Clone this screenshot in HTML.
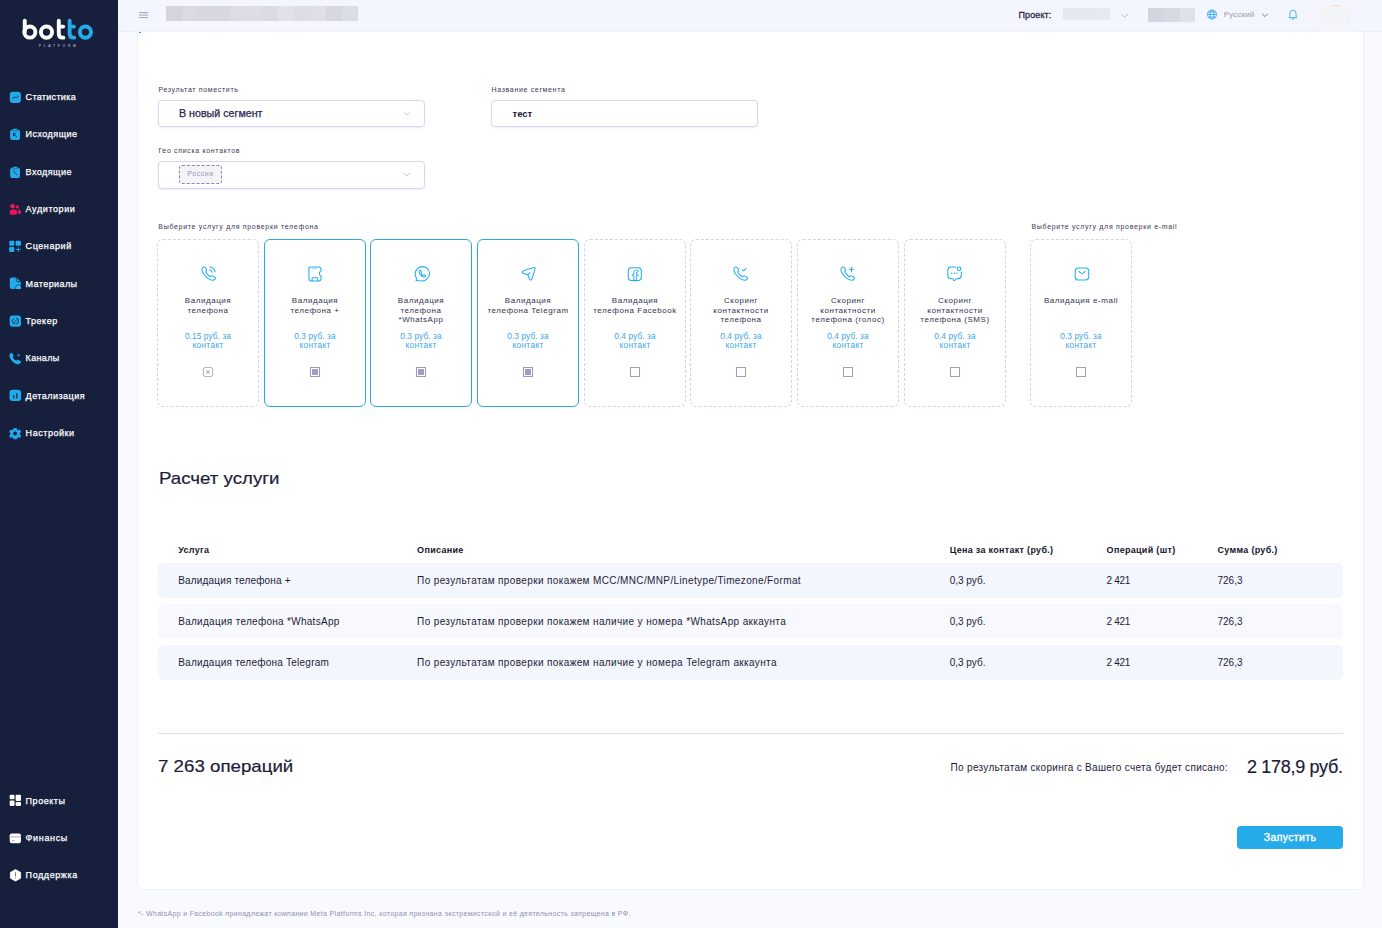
<!DOCTYPE html>
<html lang="ru"><head><meta charset="utf-8"><title>botto</title>
<style>
html,body{margin:0;padding:0;width:1382px;height:928px;overflow:hidden;background:#f9fafd;}
body{position:relative;font-family:"Liberation Sans",sans-serif;}
.a{position:absolute;display:block;}
.t{position:absolute;white-space:nowrap;}
</style></head><body>
<div class="a" style="left:0px;top:0px;width:118px;height:928px;background:#161f3b"></div>
<svg class="a" style="left:0px;top:0px" width="118" height="60" viewBox="0 0 118 60">
<g fill="none" stroke-width="3.9">
<path d="M24.75 20.7V32.1" stroke="#fff" stroke-linecap="round"/>
<circle cx="29.85" cy="32.1" r="5.55" stroke="#fff"/>
<circle cx="46.5" cy="32.1" r="5.6" stroke="#fff"/>
<path d="M58.8 20.7V33.4Q58.8 37.65 62.6 37.65H63.4" stroke="#fff" stroke-linecap="round"/>
<path d="M58.8 26.55H63.2" stroke="#fff" stroke-linecap="round" stroke-width="3.8"/>
<path d="M69.65 20.7V33.4Q69.65 37.65 73.4 37.65H74.2" stroke="#25abe9" stroke-linecap="round"/>
<path d="M69.65 26.55H74" stroke="#25abe9" stroke-linecap="round" stroke-width="3.8"/>
<circle cx="85.45" cy="32.1" r="5.6" stroke="#25abe9"/>
</g>
<text x="38.8" y="46.9" font-size="3.3" fill="#d6d8e4" letter-spacing="2.75" font-family="Liberation Sans">PLATFORM</text>
</svg>
<div class="t" style="left:25.6px;top:92.00px;font-size:9px;line-height:10px;color:#ffffff;letter-spacing:0.31px;-webkit-text-stroke:0.25px #ffffff;">Статистика</div>
<div class="t" style="left:25.6px;top:129.00px;font-size:9px;line-height:10px;color:#ffffff;letter-spacing:0.46px;-webkit-text-stroke:0.25px #ffffff;">Исходящие</div>
<div class="t" style="left:25.6px;top:167.00px;font-size:9px;line-height:10px;color:#ffffff;letter-spacing:0.45px;-webkit-text-stroke:0.25px #ffffff;">Входящие</div>
<div class="t" style="left:25.6px;top:204.00px;font-size:9px;line-height:10px;color:#ffffff;letter-spacing:0.6px;-webkit-text-stroke:0.25px #ffffff;">Аудитории</div>
<div class="t" style="left:25.6px;top:241.00px;font-size:9px;line-height:10px;color:#ffffff;letter-spacing:0.57px;-webkit-text-stroke:0.25px #ffffff;">Сценарий</div>
<div class="t" style="left:25.6px;top:279.00px;font-size:9px;line-height:10px;color:#ffffff;letter-spacing:0.41px;-webkit-text-stroke:0.25px #ffffff;">Материалы</div>
<div class="t" style="left:25.6px;top:316.00px;font-size:9px;line-height:10px;color:#ffffff;letter-spacing:0.5px;-webkit-text-stroke:0.25px #ffffff;">Трекер</div>
<div class="t" style="left:25.6px;top:353.00px;font-size:9px;line-height:10px;color:#ffffff;letter-spacing:0.33px;-webkit-text-stroke:0.25px #ffffff;">Каналы</div>
<div class="t" style="left:25.6px;top:391.00px;font-size:9px;line-height:10px;color:#ffffff;letter-spacing:0.47px;-webkit-text-stroke:0.25px #ffffff;">Детализация</div>
<div class="t" style="left:25.6px;top:428.00px;font-size:9px;line-height:10px;color:#ffffff;letter-spacing:0.55px;-webkit-text-stroke:0.25px #ffffff;">Настройки</div>
<div class="t" style="left:25.6px;top:796.00px;font-size:9px;line-height:10px;color:#ffffff;letter-spacing:0.54px;-webkit-text-stroke:0.25px #ffffff;">Проекты</div>
<div class="t" style="left:25.6px;top:833.00px;font-size:9px;line-height:10px;color:#ffffff;letter-spacing:0.65px;-webkit-text-stroke:0.25px #ffffff;">Финансы</div>
<div class="t" style="left:25.6px;top:870.00px;font-size:9px;line-height:10px;color:#ffffff;letter-spacing:0.58px;-webkit-text-stroke:0.25px #ffffff;">Поддержка</div>
<svg class="a" style="left:0px;top:0px" width="30" height="928" viewBox="0 0 30 928">
<rect x="9.8" y="91.8" width="11.1" height="11.2" rx="3" fill="#23aaeb"/>
<path d="M12.6 98.8L14.4 96.9L16 97.9L18.2 96.4" stroke="#172040" stroke-width="0.9" fill="none" stroke-linecap="round" stroke-linejoin="round"/>

<rect x="10.1" y="129.6" width="9.9" height="10.5" rx="2.6" fill="#23aaeb"/>
<rect x="12.8" y="128.5" width="4.6" height="2.4" rx="1.1" fill="#2bb8f5" stroke="#161f3b" stroke-width="0.5"/>
<path d="M13.6 133.9L16.6 136.9M13.6 133.9V135.6M13.6 133.9H15.3" stroke="#172040" stroke-width="0.9" fill="none" stroke-linecap="round"/>

<rect x="10.2" y="167.6" width="9.8" height="10.5" rx="2.6" fill="#23aaeb"/>
<rect x="12.8" y="166.6" width="4.6" height="2.4" rx="1.1" fill="#2bb8f5" stroke="#161f3b" stroke-width="0.5"/>
<path d="M13.4 171.2L16.8 174.6" stroke="#172040" stroke-width="0.9" fill="none" stroke-linecap="round"/>

<g fill="#ef155c">
<circle cx="12.6" cy="206.3" r="2.3"/>
<path d="M9.7 212.6Q9.7 209.4 12.8 209.4H14.2Q17.3 209.4 17.3 212.6Q17.3 214.8 15.2 214.8H11.8Q9.7 214.8 9.7 212.6Z"/>
<circle cx="17.4" cy="206.9" r="1.7"/>
<path d="M17.8 209.6Q21 209.6 21 212.4Q21 214.2 19.2 214.2H18.2Q18.8 211.6 17.8 209.6Z"/>
</g>

<g fill="#23aaeb">
<rect x="9.2" y="240.7" width="5.1" height="5.1" rx="1"/>
<rect x="15.6" y="240.7" width="5.4" height="5.1" rx="1"/>
<rect x="9.2" y="247" width="5.1" height="5" rx="1"/>
<path d="M18.3 246.9V252M15.8 249.45H20.9" stroke="#23aaeb" stroke-width="0.9"/>
</g>

<path d="M11.8 277.6H16.4L20.9 282V287.1Q20.9 289.1 18.9 289.1H11.8Q9.8 289.1 9.8 287.1V279.6Q9.8 277.6 11.8 277.6Z" fill="#23aaeb"/>
<path d="M16.3 277.7V280.1Q16.3 281.7 17.9 281.7H20.9" stroke="#172040" stroke-width="0.75" fill="none"/>
<path d="M15.6 289.3Q15.9 284.9 18.5 284.7Q21 284.8 21.2 287.2" stroke="#172040" stroke-width="0.75" fill="none"/>
<path d="M16.2 289.1Q16.5 285.4 18.5 285.3Q20.6 285.4 20.9 287.6V289.1Z" fill="#2bbcf7"/>

<rect x="9.7" y="315.4" width="11.3" height="11.4" rx="2.8" fill="#23aaeb"/>
<g stroke="#172040" stroke-width="0.8" fill="none">
<path d="M14.5 318.2Q12.2 318.9 12.4 321.4Q12.7 323.8 15.2 323.8"/>
<path d="M16.2 318.1Q18.6 318.4 18.5 320.8Q18.4 323.6 15.9 324"/>
<path d="M13.9 322.5L17.2 319.4"/>
</g>

<g fill="#23aaeb">
<path d="M10.4 353.3Q9.2 354.3 9.4 356.2Q10 359.3 13.2 362.3Q16.2 364.8 18.6 364.3Q20.2 363.9 20.9 362.6L21 361.6L18.4 359.8Q17.6 359.4 17 360L16.3 360.7Q14.2 359.6 12.7 357.4L13.3 356.6Q13.8 356 13.4 355.3L11.9 352.9Q11.2 352.6 10.4 353.3Z"/>
<path d="M18.5 353.5V356.9M16.8 355.2H20.2" stroke="#2b8fd8" stroke-width="0.8"/>
</g>

<rect x="9.5" y="389.8" width="11.6" height="11.3" rx="3" fill="#23aaeb"/>
<rect x="13.2" y="395.2" width="1.2" height="3.3" fill="#172040"/>
<rect x="16.3" y="393" width="1.2" height="5.5" fill="#172040"/>

<g transform="translate(15.15 433.5)">
<path fill="#23aaeb" d="M-1.5 -5.5H1.5L1.9 -3.9L3.2 -3.2L4.7 -3.9L6 -1.4L4.8 -0.4V0.9L6 1.9L4.7 4.4L3.2 3.7L1.9 4.4L1.5 5.8H-1.5L-1.9 4.4L-3.2 3.7L-4.7 4.4L-6 1.9L-4.8 0.9V-0.4L-6 -1.4L-4.7 -3.9L-3.2 -3.2L-1.9 -3.9Z"/>
<circle r="1.9" fill="#161f3b"/>
</g>

<g fill="#ffffff">
<rect x="9.7" y="794.7" width="4.8" height="4.6" rx="1"/>
<rect x="15.6" y="794.7" width="5.4" height="6.2" rx="1"/>
<rect x="9.7" y="800.4" width="4.8" height="5.6" rx="1"/>
<rect x="15.6" y="801.9" width="5.4" height="4.1" rx="1"/>
</g>

<rect x="9.7" y="833.4" width="11.3" height="9.9" rx="2.2" fill="#ffffff"/>
<rect x="9.7" y="835.9" width="11.3" height="1.8" fill="#c9cbd6"/>
<path d="M12 840.6H14.6" stroke="#8c90a8" stroke-width="0.7"/>

<path d="M15.5 869.6L20.6 872.4V878.2L15.5 881L10.4 878.2V872.4Z" fill="#ffffff" stroke="#ffffff" stroke-width="0.8" stroke-linejoin="round"/>
<path d="M15.5 872.6V876.1" stroke="#6a6f8c" stroke-width="0.9" stroke-linecap="round"/>
<circle cx="15.5" cy="878" r="0.5" fill="#6a6f8c"/>
</svg>
<div class="a" style="left:118px;top:0px;width:1264px;height:31px;background:#f3f6fe"></div>
<div class="a" style="left:118px;top:31px;width:1264px;height:1px;background:#eaedfb"></div>
<svg class="a" style="left:136px;top:8px" width="16" height="14" viewBox="0 0 16 14"><path d="M3 4.6H12.2M3 7.1H12.2M3 9.6H12.2" stroke="#9b98ba" stroke-width="0.9"/></svg>
<div class="a" style="left:165.6px;top:5.6px;width:16.2px;height:15.8px;background:#d4d5dc"></div>
<div class="a" style="left:181.6px;top:5.6px;width:16.2px;height:15.8px;background:#d8dbe3"></div>
<div class="a" style="left:197.6px;top:5.6px;width:16.2px;height:15.8px;background:#d6d7df"></div>
<div class="a" style="left:213.6px;top:5.6px;width:16.2px;height:15.8px;background:#d6d8de"></div>
<div class="a" style="left:229.6px;top:5.6px;width:16.2px;height:15.8px;background:#dadde6"></div>
<div class="a" style="left:245.6px;top:5.6px;width:16.2px;height:15.8px;background:#dcdde5"></div>
<div class="a" style="left:261.6px;top:5.6px;width:16.2px;height:15.8px;background:#d9dae3"></div>
<div class="a" style="left:277.6px;top:5.6px;width:16.2px;height:15.8px;background:#e1e2e8"></div>
<div class="a" style="left:293.6px;top:5.6px;width:16.2px;height:15.8px;background:#dcdde5"></div>
<div class="a" style="left:309.6px;top:5.6px;width:16.2px;height:15.8px;background:#dfdfe7"></div>
<div class="a" style="left:325.6px;top:5.6px;width:16.2px;height:15.8px;background:#d6d8e1"></div>
<div class="a" style="left:341.6px;top:5.6px;width:16.2px;height:15.8px;background:#dcdee7"></div>
<div class="t" style="left:1018.5px;top:10.00px;font-size:9px;line-height:10px;color:#2c2a48;letter-spacing:0.1px;-webkit-text-stroke:0.3px #2c2a48;">Проект:</div>
<div class="a" style="left:1063.4px;top:8px;width:32px;height:12px;background:#e5e8f1"></div>
<div class="a" style="left:1095.4px;top:8px;width:14.7px;height:12px;background:#e8eaf3"></div>
<svg class="a" style="left:1119px;top:11px" width="12" height="9" viewBox="0 0 12 9"><path d="M2.2 3L5.6 6.2L9 3" stroke="#a4abc9" stroke-width="0.8" fill="none"/></svg>
<div class="a" style="left:1148px;top:8px;width:16px;height:13.7px;background:#d3d5e0"></div>
<div class="a" style="left:1164px;top:8px;width:16px;height:13.7px;background:#d7d9e3"></div>
<div class="a" style="left:1180px;top:8px;width:15px;height:13.7px;background:#e0e2ea"></div>
<svg class="a" style="left:1206px;top:9px" width="12" height="11" viewBox="0 0 12 11"><g fill="none" stroke="#3aa8f0" stroke-width="0.9"><circle cx="6" cy="5.5" r="4.5"/><ellipse cx="6" cy="5.5" rx="2" ry="4.5"/><path d="M1.5 5.5H10.5M2.3 3H9.7M2.3 8H9.7"/></g></svg>
<div class="t" style="left:1223.7px;top:10.00px;font-size:8px;line-height:9px;color:#9c9bb2;letter-spacing:0.15px;">Русский</div>
<svg class="a" style="left:1260px;top:11px" width="10" height="8" viewBox="0 0 10 8"><path d="M2.2 2.8L5 5.6L7.8 2.8" stroke="#6e6a90" stroke-width="0.9" fill="none"/></svg>
<svg class="a" style="left:1287px;top:9px" width="12" height="11" viewBox="0 0 12 11"><path d="M6 1.2Q3 1.2 2.9 4.6V7.2L2 8.6H10L9.1 7.2V4.6Q9 1.2 6 1.2ZM4.6 9.4Q5 10.3 6 10.3Q7 10.3 7.4 9.4" stroke="#3aa8f0" stroke-width="0.9" fill="none" stroke-linejoin="round"/></svg>
<div class="a" style="left:1319px;top:6.7px;width:31px;height:16.3px;background:#f3f4f8"></div>
<div class="a" style="left:1319px;top:23px;width:31px;height:6px;background:#f6f4f8"></div>
<div class="a" style="left:1330px;top:4.7px;width:11px;height:1.3px;background:#fbdcb6;border-radius:1px"></div>
<div class="a" style="left:118px;top:32px;width:1264px;height:896px;background:#f9fafd"></div>
<div class="a" style="left:138px;top:32px;width:1225px;height:857px;background:#ffffff;border-radius:0 0 6px 6px;box-shadow:0 0 0 1px #f0f1f8"></div>
<div class="a" style="left:138.6px;top:32px;width:2px;height:1.2px;background:#25abe9"></div>
<div class="t" style="left:158.4px;top:86.00px;font-size:7px;line-height:7px;color:#3a3856;letter-spacing:0.66px;">Результат поместить</div>
<div class="t" style="left:491.5px;top:86.00px;font-size:7px;line-height:7px;color:#3a3856;letter-spacing:0.66px;">Название сегмента</div>
<div class="t" style="left:158.4px;top:147.00px;font-size:7px;line-height:7px;color:#3a3856;letter-spacing:0.66px;">Гео списка контактов</div>
<div class="a" style="left:158px;top:100px;width:267px;height:27px;background:#fff;border:1px solid #d5d8f0;border-radius:4px;box-sizing:border-box;box-shadow:0 1px 2px rgba(180,185,230,0.25)"></div>
<div class="a" style="left:491px;top:100px;width:267px;height:27px;background:#fff;border:1px solid #d5d8f0;border-radius:4px;box-sizing:border-box;box-shadow:0 1px 2px rgba(180,185,230,0.25)"></div>
<div class="a" style="left:158px;top:161px;width:267px;height:27.5px;background:#fff;border:1px solid #d5d8f0;border-radius:4px;box-sizing:border-box;box-shadow:0 1px 2px rgba(180,185,230,0.25)"></div>
<div class="t" style="left:179.4px;top:108.00px;font-size:10px;line-height:11px;color:#2a2850;transform:scaleX(1.068);transform-origin:left top;-webkit-text-stroke:0.25px #2a2850;">В новый сегмент</div>
<div class="t" style="left:512.5px;top:108.00px;font-size:9.5px;line-height:11px;color:#15152a;font-weight:700;">тест</div>
<svg class="a" style="left:400px;top:109px" width="14" height="10" viewBox="0 0 14 10"><path d="M4.2 3.4L7 5.9L9.8 3.4" stroke="#b9bdd0" stroke-width="0.8" fill="none"/></svg>
<svg class="a" style="left:400px;top:170px" width="14" height="10" viewBox="0 0 14 10"><path d="M4.2 3.4L7 5.9L9.8 3.4" stroke="#b9bdd0" stroke-width="0.8" fill="none"/></svg>
<div class="a" style="left:179px;top:165.2px;width:43px;height:18.5px;background:#f3f3f8;border:1px dashed #8f86ad;border-radius:3px;box-sizing:border-box"></div>
<div class="t" style="left:187.3px;top:170.00px;font-size:7px;line-height:7px;color:#9b9aae;letter-spacing:0.55px;">Россия</div>
<div class="t" style="left:158.3px;top:223.00px;font-size:7px;line-height:7px;color:#3a3856;letter-spacing:0.69px;">Выберите услугу для проверки телефона</div>
<div class="t" style="left:1031.5px;top:223.00px;font-size:7px;line-height:7px;color:#3a3856;letter-spacing:0.69px;">Выберите услугу для проверки e-mail</div>
<svg class="a" style="left:200.6px;top:265.6px" width="16" height="16" viewBox="0 0 16 16"><g fill="none" stroke="#22adf0" stroke-width="1.05" stroke-linecap="round" stroke-linejoin="round" ><path d="M2.6 1.1Q1.1 1.5 0.9 3.2Q0.8 5.2 2.5 7.8Q4.3 10.5 6.9 12.4Q9.2 14 11.4 14.3Q12.9 14.4 13.9 13.4Q14.6 12.7 14.4 12Q14.2 11.3 13.3 10.8L11.5 9.9Q10.7 9.5 10.1 10.1L9.4 10.8Q7.8 10 6.4 8.4Q5.1 7 4.6 5.8L5.3 5.1Q5.8 4.5 5.5 3.7L4.6 1.9Q4.1 1 3.3 1Z"/><path d="M8.6 3.8Q10.6 4.4 11.2 6.3M8.8 0.9Q13.4 1.6 14.1 5.8"/></g></svg>
<svg class="a" style="left:308.2px;top:265.6px" width="15" height="16" viewBox="0 0 15 16"><g fill="none" stroke="#22adf0" stroke-width="1.05" stroke-linecap="round" stroke-linejoin="round" ><path d="M2.7 0.9H10.4Q12.9 0.9 13.1 3.4V4.9Q11.4 5.8 11.4 7.6Q11.4 9.4 13.1 10.2V12.5Q13 15 10.5 15H3.2Q0.9 15 0.9 12.6V3Q0.9 0.9 2.7 0.9Z"/><path d="M4.1 14.8V12.6Q4.1 11.8 4.9 11.8H8.8Q9.6 11.8 9.6 12.6V14.8"/><path d="M4.2 2.7H9.3" stroke-dasharray="0.75 0.75" stroke-linecap="butt" stroke-width="0.9"/></g></svg>
<svg class="a" style="left:413.9px;top:265.6px" width="17" height="16" viewBox="0 0 17 16"><g fill="none" stroke="#22adf0" stroke-width="1.05" stroke-linecap="round" stroke-linejoin="round" ><path d="M2.1 14.7L3.6 14.3Q4.2 14.1 4.8 14.4Q6.3 15 8.4 15Q11.4 14.9 13.5 12.7Q15.6 10.4 15.5 7.5Q15.4 4.4 13.2 2.4Q11.1 0.6 8.4 0.6Q5.3 0.6 3.2 2.8Q1.1 5 1.1 8Q1.2 10.1 2.2 11.6Q2.6 12.3 2.4 13Z"/><path d="M5.9 4.1Q5.1 4.5 5.1 5.6Q5.3 7.9 7.4 9.9Q9.2 11.3 10.6 11Q11.4 10.8 11.7 10.1Q11.6 9.3 10.6 8.9Q9.7 8.6 9.2 9Q8.6 9.5 7.8 8.8Q6.9 7.9 7.2 7.2Q7.6 6.7 7.3 5.6Q6.8 4 5.9 4.1Z"/></g></svg>
<svg class="a" style="left:520.8px;top:265.6px" width="16" height="16" viewBox="0 0 16 16"><g fill="none" stroke="#22adf0" stroke-width="1.05" stroke-linecap="round" stroke-linejoin="round" ><path d="M13.3 1.6Q14.4 1.5 14.1 2.7L11.1 12.5Q10.2 15.1 8.7 13.3L6.7 8.8L2.8 7.6Q0.7 6.8 1.6 5.4Q2.4 4.4 4.6 3.9Z"/><path d="M6.7 8.8L8.9 6.6"/></g></svg>
<svg class="a" style="left:627.2px;top:265.6px" width="16" height="16" viewBox="0 0 16 16"><g fill="none" stroke="#22adf0" stroke-width="1.05" stroke-linecap="round" stroke-linejoin="round" ><path d="M4.3 1.8H11.3Q14.2 1.9 14.3 4.8V11.5Q14.2 14.4 11.3 14.5H4.3Q1.4 14.4 1.3 11.5V4.8Q1.4 1.9 4.3 1.8Z"/><path d="M6.9 15V9.9H5.5Q4.9 9.1 5.5 8.3H6.9V6.6Q6.9 4.1 9.6 4Q11.2 3.9 11.4 4.9Q11.5 5.9 10.6 6Q9.4 6 9.4 7V8.3H10.8Q11.4 9.1 10.8 9.9H9.4V15" stroke-width="0.95"/></g></svg>
<svg class="a" style="left:733.4px;top:265.6px" width="16" height="16" viewBox="0 0 16 16"><g fill="none" stroke="#22adf0" stroke-width="1.05" stroke-linecap="round" stroke-linejoin="round" ><path d="M2.6 1.1Q1.1 1.5 0.9 3.2Q0.8 5.2 2.5 7.8Q4.3 10.5 6.9 12.4Q9.2 14 11.4 14.3Q12.9 14.4 13.9 13.4Q14.6 12.7 14.4 12Q14.2 11.3 13.3 10.8L11.5 9.9Q10.7 9.5 10.1 10.1L9.4 10.8Q7.8 10 6.4 8.4Q5.1 7 4.6 5.8L5.3 5.1Q5.8 4.5 5.5 3.7L4.6 1.9Q4.1 1 3.3 1Z"/><path d="M9.3 3.7L10.6 4.8L13 2.3"/></g></svg>
<svg class="a" style="left:840.2px;top:265.6px" width="16" height="16" viewBox="0 0 16 16"><g fill="none" stroke="#22adf0" stroke-width="1.05" stroke-linecap="round" stroke-linejoin="round" ><path d="M2.6 1.1Q1.1 1.5 0.9 3.2Q0.8 5.2 2.5 7.8Q4.3 10.5 6.9 12.4Q9.2 14 11.4 14.3Q12.9 14.4 13.9 13.4Q14.6 12.7 14.4 12Q14.2 11.3 13.3 10.8L11.5 9.9Q10.7 9.5 10.1 10.1L9.4 10.8Q7.8 10 6.4 8.4Q5.1 7 4.6 5.8L5.3 5.1Q5.8 4.5 5.5 3.7L4.6 1.9Q4.1 1 3.3 1Z"/><path d="M11.5 1.2V5.4M9.5 3.3H13.6"/></g></svg>
<svg class="a" style="left:947.0px;top:265.6px" width="16" height="16" viewBox="0 0 16 16"><g fill="none" stroke="#22adf0" stroke-width="1.05" stroke-linecap="round" stroke-linejoin="round" ><path d="M9 0.9H3.9Q0.9 1.1 0.8 4.2V9.8Q1 12.6 3.9 12.7H5.2Q5.8 12.7 6.1 13.2L6.7 14.1Q7.2 14.9 8 14.1L8.6 13.2Q8.9 12.7 9.5 12.7H11.2Q14.1 12.5 14.3 9.6V6.1"/><circle cx="12.1" cy="2.7" r="1.8"/><path d="M4.7 7.3H4.75M7.3 7.3H7.35M9.8 7.3H9.85" stroke-width="1.4"/></g></svg>
<svg class="a" style="left:1073.6px;top:265.6px" width="16" height="16" viewBox="0 0 16 16"><g fill="none" stroke="#22adf0" stroke-width="1.05" stroke-linecap="round" stroke-linejoin="round" ><path d="M4.1 2H11.8Q14.6 2.2 14.7 5V11.1Q14.6 13.9 11.8 14H4.1Q1.4 13.9 1.2 11.1V5Q1.4 2.2 4.1 2Z"/><path d="M5 5.5L7 7.1Q8 7.8 9 7.1L11.1 5.5"/></g></svg>
<div class="a" style="left:157px;top:239px;width:102px;height:167.5px;border:1px dashed #d2d5ee;border-radius:6px;box-sizing:border-box"></div>
<div class="t" style="left:153.00px;width:110px;text-align:center;top:296.00px;font-size:8px;line-height:9px;color:#33324e;letter-spacing:0.55px;">Валидация</div>
<div class="t" style="left:153.00px;width:110px;text-align:center;top:306.00px;font-size:8px;line-height:9px;color:#33324e;letter-spacing:0.55px;">телефона</div>
<div class="t" style="left:153.00px;width:110px;text-align:center;top:331.00px;font-size:8.3px;line-height:10px;color:#3aa6e5;letter-spacing:0.1px;">0.15 руб. за</div>
<div class="t" style="left:153.00px;width:110px;text-align:center;top:340.00px;font-size:8.3px;line-height:10px;color:#3aa6e5;letter-spacing:0.35px;">контакт</div>
<div class="a" style="left:203.0px;top:367.3px;width:10px;height:9.8px;border:1px solid #b6b0d6;border-radius:2px;box-sizing:border-box"></div>
<svg class="a" style="left:203.0px;top:367.3px" width="10" height="10" viewBox="0 0 10 10"><path d="M3.4 3.4L6.6 6.6M6.6 3.4L3.4 6.6" stroke="#8d87b0" stroke-width="0.8"/></svg>
<div class="a" style="left:264px;top:239px;width:102px;height:167.5px;border:1px solid #2ba7e4;border-radius:6px;box-sizing:border-box"></div>
<div class="t" style="left:260.00px;width:110px;text-align:center;top:296.00px;font-size:8px;line-height:9px;color:#33324e;letter-spacing:0.55px;">Валидация</div>
<div class="t" style="left:260.00px;width:110px;text-align:center;top:306.00px;font-size:8px;line-height:9px;color:#33324e;letter-spacing:0.55px;">телефона +</div>
<div class="t" style="left:260.00px;width:110px;text-align:center;top:331.00px;font-size:8.3px;line-height:10px;color:#3aa6e5;letter-spacing:0.1px;">0.3 руб. за</div>
<div class="t" style="left:260.00px;width:110px;text-align:center;top:340.00px;font-size:8.3px;line-height:10px;color:#3aa6e5;letter-spacing:0.35px;">контакт</div>
<div class="a" style="left:310.0px;top:367.3px;width:10px;height:9.8px;border:1px solid #9e97c6;box-sizing:border-box"></div>
<div class="a" style="left:312.0px;top:369.3px;width:6px;height:5.8px;background:#a29bc8"></div>
<div class="a" style="left:370px;top:239px;width:102px;height:167.5px;border:1px solid #2ba7e4;border-radius:6px;box-sizing:border-box"></div>
<div class="t" style="left:366.00px;width:110px;text-align:center;top:296.00px;font-size:8px;line-height:9px;color:#33324e;letter-spacing:0.55px;">Валидация</div>
<div class="t" style="left:366.00px;width:110px;text-align:center;top:306.00px;font-size:8px;line-height:9px;color:#33324e;letter-spacing:0.55px;">телефона</div>
<div class="t" style="left:366.00px;width:110px;text-align:center;top:315.00px;font-size:8px;line-height:9px;color:#33324e;letter-spacing:0.55px;">*WhatsApp</div>
<div class="t" style="left:366.00px;width:110px;text-align:center;top:331.00px;font-size:8.3px;line-height:10px;color:#3aa6e5;letter-spacing:0.1px;">0.3 руб. за</div>
<div class="t" style="left:366.00px;width:110px;text-align:center;top:340.00px;font-size:8.3px;line-height:10px;color:#3aa6e5;letter-spacing:0.35px;">контакт</div>
<div class="a" style="left:416.0px;top:367.3px;width:10px;height:9.8px;border:1px solid #9e97c6;box-sizing:border-box"></div>
<div class="a" style="left:418.0px;top:369.3px;width:6px;height:5.8px;background:#a29bc8"></div>
<div class="a" style="left:477px;top:239px;width:102px;height:167.5px;border:1px solid #2ba7e4;border-radius:6px;box-sizing:border-box"></div>
<div class="t" style="left:473.00px;width:110px;text-align:center;top:296.00px;font-size:8px;line-height:9px;color:#33324e;letter-spacing:0.55px;">Валидация</div>
<div class="t" style="left:473.00px;width:110px;text-align:center;top:306.00px;font-size:8px;line-height:9px;color:#33324e;letter-spacing:0.55px;">телефона Telegram</div>
<div class="t" style="left:473.00px;width:110px;text-align:center;top:331.00px;font-size:8.3px;line-height:10px;color:#3aa6e5;letter-spacing:0.1px;">0.3 руб. за</div>
<div class="t" style="left:473.00px;width:110px;text-align:center;top:340.00px;font-size:8.3px;line-height:10px;color:#3aa6e5;letter-spacing:0.35px;">контакт</div>
<div class="a" style="left:523.0px;top:367.3px;width:10px;height:9.8px;border:1px solid #9e97c6;box-sizing:border-box"></div>
<div class="a" style="left:525.0px;top:369.3px;width:6px;height:5.8px;background:#a29bc8"></div>
<div class="a" style="left:584px;top:239px;width:102px;height:167.5px;border:1px dashed #d2d5ee;border-radius:6px;box-sizing:border-box"></div>
<div class="t" style="left:580.00px;width:110px;text-align:center;top:296.00px;font-size:8px;line-height:9px;color:#33324e;letter-spacing:0.55px;">Валидация</div>
<div class="t" style="left:580.00px;width:110px;text-align:center;top:306.00px;font-size:8px;line-height:9px;color:#33324e;letter-spacing:0.55px;">телефона Facebook</div>
<div class="t" style="left:580.00px;width:110px;text-align:center;top:331.00px;font-size:8.3px;line-height:10px;color:#3aa6e5;letter-spacing:0.1px;">0.4 руб. за</div>
<div class="t" style="left:580.00px;width:110px;text-align:center;top:340.00px;font-size:8.3px;line-height:10px;color:#3aa6e5;letter-spacing:0.35px;">контакт</div>
<div class="a" style="left:630.0px;top:367.3px;width:10px;height:9.8px;border:1px solid #a49dcb;box-sizing:border-box"></div>
<div class="a" style="left:690px;top:239px;width:102px;height:167.5px;border:1px dashed #d2d5ee;border-radius:6px;box-sizing:border-box"></div>
<div class="t" style="left:686.00px;width:110px;text-align:center;top:296.00px;font-size:8px;line-height:9px;color:#33324e;letter-spacing:0.55px;">Скоринг</div>
<div class="t" style="left:686.00px;width:110px;text-align:center;top:306.00px;font-size:8px;line-height:9px;color:#33324e;letter-spacing:0.55px;">контактности</div>
<div class="t" style="left:686.00px;width:110px;text-align:center;top:315.00px;font-size:8px;line-height:9px;color:#33324e;letter-spacing:0.55px;">телефона</div>
<div class="t" style="left:686.00px;width:110px;text-align:center;top:331.00px;font-size:8.3px;line-height:10px;color:#3aa6e5;letter-spacing:0.1px;">0.4 руб. за</div>
<div class="t" style="left:686.00px;width:110px;text-align:center;top:340.00px;font-size:8.3px;line-height:10px;color:#3aa6e5;letter-spacing:0.35px;">контакт</div>
<div class="a" style="left:736.0px;top:367.3px;width:10px;height:9.8px;border:1px solid #a49dcb;box-sizing:border-box"></div>
<div class="a" style="left:797px;top:239px;width:102px;height:167.5px;border:1px dashed #d2d5ee;border-radius:6px;box-sizing:border-box"></div>
<div class="t" style="left:793.00px;width:110px;text-align:center;top:296.00px;font-size:8px;line-height:9px;color:#33324e;letter-spacing:0.55px;">Скоринг</div>
<div class="t" style="left:793.00px;width:110px;text-align:center;top:306.00px;font-size:8px;line-height:9px;color:#33324e;letter-spacing:0.55px;">контактности</div>
<div class="t" style="left:793.00px;width:110px;text-align:center;top:315.00px;font-size:8px;line-height:9px;color:#33324e;letter-spacing:0.55px;">телефона (голос)</div>
<div class="t" style="left:793.00px;width:110px;text-align:center;top:331.00px;font-size:8.3px;line-height:10px;color:#3aa6e5;letter-spacing:0.1px;">0.4 руб. за</div>
<div class="t" style="left:793.00px;width:110px;text-align:center;top:340.00px;font-size:8.3px;line-height:10px;color:#3aa6e5;letter-spacing:0.35px;">контакт</div>
<div class="a" style="left:843.0px;top:367.3px;width:10px;height:9.8px;border:1px solid #a49dcb;box-sizing:border-box"></div>
<div class="a" style="left:904px;top:239px;width:102px;height:167.5px;border:1px dashed #d2d5ee;border-radius:6px;box-sizing:border-box"></div>
<div class="t" style="left:900.00px;width:110px;text-align:center;top:296.00px;font-size:8px;line-height:9px;color:#33324e;letter-spacing:0.55px;">Скоринг</div>
<div class="t" style="left:900.00px;width:110px;text-align:center;top:306.00px;font-size:8px;line-height:9px;color:#33324e;letter-spacing:0.55px;">контактности</div>
<div class="t" style="left:900.00px;width:110px;text-align:center;top:315.00px;font-size:8px;line-height:9px;color:#33324e;letter-spacing:0.55px;">телефона (SMS)</div>
<div class="t" style="left:900.00px;width:110px;text-align:center;top:331.00px;font-size:8.3px;line-height:10px;color:#3aa6e5;letter-spacing:0.1px;">0.4 руб. за</div>
<div class="t" style="left:900.00px;width:110px;text-align:center;top:340.00px;font-size:8.3px;line-height:10px;color:#3aa6e5;letter-spacing:0.35px;">контакт</div>
<div class="a" style="left:950.0px;top:367.3px;width:10px;height:9.8px;border:1px solid #a49dcb;box-sizing:border-box"></div>
<div class="a" style="left:1030px;top:239px;width:102px;height:167.5px;border:1px dashed #d2d5ee;border-radius:6px;box-sizing:border-box"></div>
<div class="t" style="left:1026.00px;width:110px;text-align:center;top:296.00px;font-size:8px;line-height:9px;color:#33324e;letter-spacing:0.55px;">Валидация e-mail</div>
<div class="t" style="left:1026.00px;width:110px;text-align:center;top:331.00px;font-size:8.3px;line-height:10px;color:#3aa6e5;letter-spacing:0.1px;">0.3 руб. за</div>
<div class="t" style="left:1026.00px;width:110px;text-align:center;top:340.00px;font-size:8.3px;line-height:10px;color:#3aa6e5;letter-spacing:0.35px;">контакт</div>
<div class="a" style="left:1076px;top:367.2px;width:10px;height:9.8px;border:1px solid #a49dcb;box-sizing:border-box"></div>
<div class="t" style="left:159.1px;top:469.00px;font-size:17px;line-height:19px;color:#1c1c38;transform:scaleX(1.098);transform-origin:left top;-webkit-text-stroke:0.2px #1c1c38;">Расчет услуги</div>
<div class="t" style="left:178.2px;top:545.00px;font-size:9px;line-height:10px;color:#15152e;font-weight:700;letter-spacing:0.3px;">Услуга</div>
<div class="t" style="left:417.1px;top:545.00px;font-size:9px;line-height:10px;color:#15152e;font-weight:700;letter-spacing:0.3px;">Описание</div>
<div class="t" style="left:949.7px;top:545.00px;font-size:9px;line-height:10px;color:#15152e;font-weight:700;letter-spacing:0.3px;">Цена за контакт (руб.)</div>
<div class="t" style="left:1106.6px;top:545.00px;font-size:9px;line-height:10px;color:#15152e;font-weight:700;letter-spacing:0.3px;">Операций (шт)</div>
<div class="t" style="left:1217.5px;top:545.00px;font-size:9px;line-height:10px;color:#15152e;font-weight:700;letter-spacing:0.3px;">Сумма (руб.)</div>
<div class="a" style="left:158px;top:563px;width:1185px;height:35px;background:#f3f6fd;border-radius:5px"></div>
<div class="t" style="left:178.2px;top:575.00px;font-size:10px;line-height:11px;color:#1c1c38;letter-spacing:0.17px;">Валидация телефона +</div>
<div class="t" style="left:417.1px;top:575.00px;font-size:10px;line-height:11px;color:#1c1c38;letter-spacing:0.37px;">По результатам проверки покажем MCC/MNC/MNP/Linetype/Timezone/Format</div>
<div class="t" style="left:949.7px;top:575.00px;font-size:10px;line-height:11px;color:#1c1c38;">0,3 руб.</div>
<div class="t" style="left:1106.6px;top:575.00px;font-size:10px;line-height:11px;color:#1c1c38;letter-spacing:-0.3px;">2 421</div>
<div class="t" style="left:1217.5px;top:575.00px;font-size:10px;line-height:11px;color:#1c1c38;">726,3</div>
<div class="a" style="left:158px;top:604px;width:1185px;height:35px;background:#f8f9fe;border-radius:5px"></div>
<div class="t" style="left:178.2px;top:616.00px;font-size:10px;line-height:11px;color:#1c1c38;letter-spacing:0.29px;">Валидация телефона *WhatsApp</div>
<div class="t" style="left:417.1px;top:616.00px;font-size:10px;line-height:11px;color:#1c1c38;letter-spacing:0.37px;">По результатам проверки покажем наличие у номера *WhatsApp аккаунта</div>
<div class="t" style="left:949.7px;top:616.00px;font-size:10px;line-height:11px;color:#1c1c38;">0,3 руб.</div>
<div class="t" style="left:1106.6px;top:616.00px;font-size:10px;line-height:11px;color:#1c1c38;letter-spacing:-0.3px;">2 421</div>
<div class="t" style="left:1217.5px;top:616.00px;font-size:10px;line-height:11px;color:#1c1c38;">726,3</div>
<div class="a" style="left:158px;top:645px;width:1185px;height:35px;background:#f3f6fd;border-radius:5px"></div>
<div class="t" style="left:178.2px;top:657.00px;font-size:10px;line-height:11px;color:#1c1c38;letter-spacing:0.24px;">Валидация телефона Telegram</div>
<div class="t" style="left:417.1px;top:657.00px;font-size:10px;line-height:11px;color:#1c1c38;letter-spacing:0.37px;">По результатам проверки покажем наличие у номера Telegram аккаунта</div>
<div class="t" style="left:949.7px;top:657.00px;font-size:10px;line-height:11px;color:#1c1c38;">0,3 руб.</div>
<div class="t" style="left:1106.6px;top:657.00px;font-size:10px;line-height:11px;color:#1c1c38;letter-spacing:-0.3px;">2 421</div>
<div class="t" style="left:1217.5px;top:657.00px;font-size:10px;line-height:11px;color:#1c1c38;">726,3</div>
<div class="a" style="left:158px;top:733px;width:1185px;height:1px;background:#dadff2"></div>
<div class="t" style="left:158.1px;top:757.00px;font-size:17px;line-height:19px;color:#1c1c38;transform:scaleX(1.1);transform-origin:left top;-webkit-text-stroke:0.2px #1c1c38;">7 263 операций</div>
<div class="t" style="left:950.6px;top:762.00px;font-size:10px;line-height:11px;color:#1c1c38;letter-spacing:0.3px;">По результатам скоринга с Вашего счета будет списано:</div>
<div class="t" style="left:1142.70px;width:200px;text-align:right;top:757.00px;font-size:18px;line-height:20px;color:#1c1c38;letter-spacing:-0.3px;-webkit-text-stroke:0.2px #1c1c38;">2 178,9 руб.</div>
<div class="a" style="left:1237.3px;top:826px;width:105.4px;height:22.5px;background:#25abe9;border-radius:4px"></div>
<div class="t" style="left:1237.50px;width:105px;text-align:center;top:831.00px;font-size:10.5px;line-height:12px;color:#ffffff;letter-spacing:0.38px;-webkit-text-stroke:0.35px #ffffff;">Запустить</div>
<div class="t" style="left:138px;top:910.00px;font-size:7px;line-height:7px;color:#8f90b0;letter-spacing:0.33px;">*- WhatsApp и Facebook принадлежат компании Meta Platforms Inc, которая признана экстремистской и её деятельность запрещена в РФ.</div>
</body></html>
